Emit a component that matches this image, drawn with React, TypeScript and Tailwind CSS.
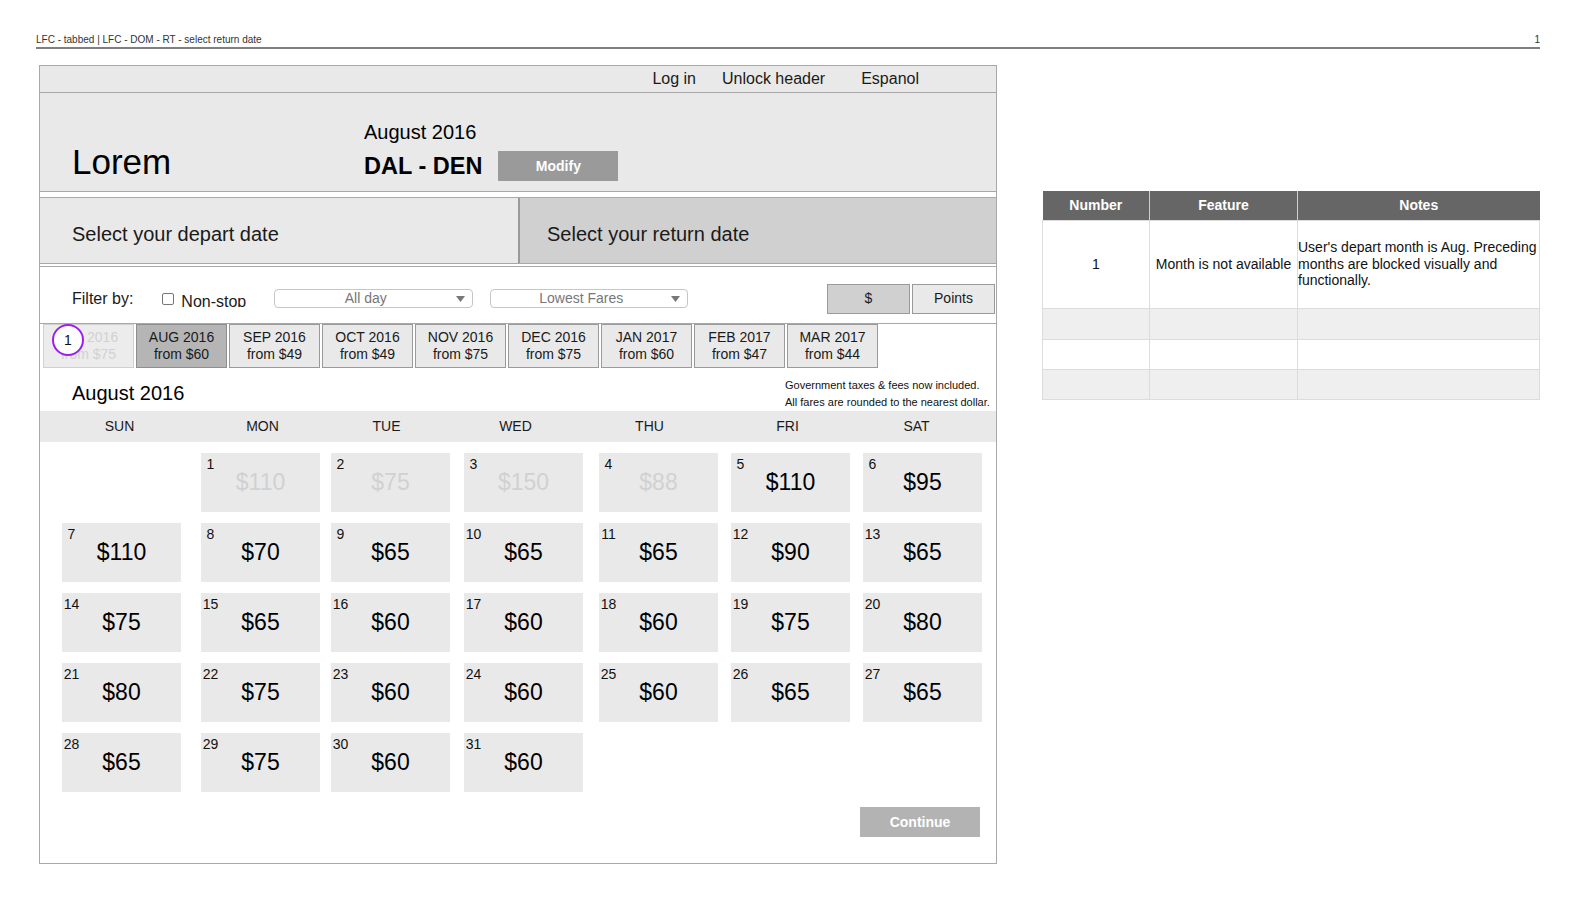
import React from 'react';

type Month = { label: string; from: string; state: 'disabled' | 'active' | 'normal' };

const months: Month[] = [
    { label: 'JUL 2016', from: '$75', state: 'disabled' },
    { label: 'AUG 2016', from: '$60', state: 'active' },
    { label: 'SEP 2016', from: '$49', state: 'normal' },
    { label: 'OCT 2016', from: '$49', state: 'normal' },
    { label: 'NOV 2016', from: '$75', state: 'normal' },
    { label: 'DEC 2016', from: '$75', state: 'normal' },
    { label: 'JAN 2017', from: '$60', state: 'normal' },
    { label: 'FEB 2017', from: '$47', state: 'normal' },
    { label: 'MAR 2017', from: '$44', state: 'normal' },
];

// header labels sit a little off the cell columns in the mock
const dayLabels = [
    { d: 'SUN', ml: 'ml-[20px]' },
    { d: 'MON', ml: 'ml-[24px]' },
    { d: 'TUE', ml: 'ml-[5px]' },
    { d: 'WED', ml: 'ml-[10px]' },
    { d: 'THU', ml: 'ml-[15px]' },
    { d: 'FRI', ml: 'ml-[19px]' },
    { d: 'SAT', ml: 'ml-[10px]' },
];

const cellMargins = ['ml-[22px]', 'ml-[20px]', 'ml-[11px]', 'ml-[14px]', 'ml-[16px]', 'ml-[13px]', 'ml-[13px]'];

type Day = { day: number; price: string; disabled?: boolean } | null;

const prices: string[] = [
    '$110', '$75', '$150', '$88', '$110', '$95',
    '$110', '$70', '$65', '$65', '$65', '$90', '$65',
    '$75', '$65', '$60', '$60', '$60', '$75', '$80',
    '$80', '$75', '$60', '$60', '$60', '$65', '$65',
    '$65', '$75', '$60', '$60',
];

const buildWeeks = (): Day[][] => {
    const all: Day[] = [null];
    prices.forEach((p, i) => all.push({ day: i + 1, price: p, disabled: i < 4 }));
    const weeks: Day[][] = [];
    for (let i = 0; i < all.length; i += 7) weeks.push(all.slice(i, i + 7));
    return weeks;
};

const weeks = buildWeeks();

const Arrow = () => (
    <svg width="9" height="6" viewBox="0 0 9 6" className="shrink-0">
        <polygon points="0,0 9,0 4.5,6" fill="#777" />
    </svg>
);

const Select = ({ label, ml, w }: { label: string; ml: string; w: string }) => (
    <div className={`${ml} ${w} h-[19px] border border-[#c6c6c6] rounded-[4px] bg-white flex items-center`}>
        <span className="flex-1 text-center text-[14px] leading-[17px] text-[#777]">{label}</span>
        <span className="mr-[7px] flex items-center">
            <Arrow />
        </span>
    </div>
);

const DayCell = ({ item, ml }: { item: Day; ml: string }) => {
    if (!item) return <div className={`${ml} w-[119px] h-[59px] shrink-0`} />;
    return (
        <div className={`${ml} relative w-[119px] h-[59px] shrink-0 bg-[#e9e9e9] flex items-center justify-center`}>
            <span className="absolute left-0 top-[3px] w-[19px] text-center text-[14px] leading-[16px] text-[#111]">
                {item.day}
            </span>
            <span className={`text-[23px] leading-none ${item.disabled ? 'text-[#d1d1d1]' : 'text-black'}`}>
                {item.price}
            </span>
        </div>
    );
};

const MonthTab = ({ m }: { m: Month }) => {
    const look =
        m.state === 'disabled'
            ? 'bg-[#ececec] border-[#d0d0d0] text-[#d2d2d2]'
            : m.state === 'active'
              ? 'bg-[#b5b5b5] border-[#8e8e8e] text-[#1a1a1a]'
              : 'bg-[#e9e9e9] border-[#9a9a9a] text-[#1a1a1a]';
    return (
        <div className={`w-[91px] h-[44px] border ${look} flex flex-col items-center justify-center text-[14px] leading-[17px]`}>
            <span>{m.label}</span>
            <span>from {m.from}</span>
        </div>
    );
};

const App = () => {
    return (
        <div className="w-[1578px] h-[913px] bg-white pt-[34px] pl-[36px] pr-[38px] font-['Liberation_Sans',Arial,sans-serif] text-[#1a1a1a]">
            <div className="flex justify-between text-[10px] leading-[12px] text-[#333]">
                <span>LFC - tabbed | LFC - DOM - RT - select return date</span>
                <span>1</span>
            </div>
            <div className="mt-[1px] h-[2px] bg-[#7f7f7f]" />

            <div className="mt-[16px] flex items-start">
                {/* wireframe */}
                <div className="ml-[3px] w-[958px] h-[799px] shrink-0 border border-[#a8a8a8] flex flex-col">
                    <div className="h-[27px] bg-[#e9e9e9] border-b border-[#a8a8a8] flex items-center justify-end pr-[77px] text-[16px]">
                        <span>Log in</span>
                        <span className="ml-[26px]">Unlock header</span>
                        <span className="ml-[36px]">Espanol</span>
                    </div>

                    <div className="h-[99px] bg-[#e9e9e9] border-b border-[#a8a8a8] flex pl-[32px]">
                        <div className="mt-[48px] w-[292px] text-[35px] leading-[42px] text-black">Lorem</div>
                        <div className="mt-[27px] flex flex-col">
                            <span className="text-[20px] leading-[24px] text-black">August 2016</span>
                            <div className="mt-[7px] flex items-center">
                                <span className="text-[23.5px] leading-[30px] font-bold text-black">DAL - DEN</span>
                                <button className="ml-[16px] w-[120px] h-[30px] bg-[#9a9a9a] text-white text-[14px] font-bold">
                                    Modify
                                </button>
                            </div>
                        </div>
                    </div>

                    <div className="mt-[5px] h-[67px] border-y border-[#a8a8a8] flex text-[20px] text-[#1a1a1a]">
                        <div className="w-[478px] bg-[#e9e9e9] flex items-center pl-[32px] pt-[6px]">Select your depart date</div>
                        <div className="flex-1 bg-[#d0d0d0] border-l-2 border-[#9a9a9a] flex items-center pl-[27px] pt-[6px]">
                            Select your return date
                        </div>
                    </div>

                    <div className="mt-[2px] h-[58px] border-y border-[#a8a8a8] flex items-center pl-[32px] pr-[1px] pt-[7px] text-[16px]">
                        <span>Filter by:</span>
                        <span className="ml-[29px] w-[12px] h-[12px] border border-[#777] rounded-[2px] bg-white" />
                        <span className="ml-[7px] mt-[2px] h-[15px] overflow-hidden leading-[19px]">Non-stop</span>
                        <Select label="All day" ml="ml-[28px]" w="w-[199px]" />
                        <Select label="Lowest Fares" ml="ml-[17px]" w="w-[198px]" />
                        <button className="ml-auto w-[83px] h-[30px] border border-[#9a9a9a] bg-[#d0d0d0] text-[14px]">$</button>
                        <button className="ml-[2px] w-[83px] h-[30px] border border-[#9a9a9a] bg-[#e9e9e9] text-[14px]">Points</button>
                    </div>

                    <div className="relative flex gap-[2px] pl-[3px]">
                        {months.map((m) => (
                            <MonthTab key={m.label} m={m} />
                        ))}
                        <div className="absolute left-[12px] top-0 w-[32px] h-[32px] rounded-full border-2 border-[#9b1ef2] bg-white flex items-center justify-center text-[14px] text-[#111]">
                            1
                        </div>
                    </div>

                    <div className="h-[43px] flex">
                        <div className="pl-[32px] pt-[13px] text-[20px] leading-[24px] text-black">August 2016</div>
                        <div className="ml-auto w-[211px] pt-[9px] text-[11px] leading-[17px] text-[#111]">
                            <div>Government taxes &amp; fees now included.</div>
                            <div>All fares are rounded to the nearest dollar.</div>
                        </div>
                    </div>

                    <div className="h-[31px] bg-[#e9e9e9] flex items-center text-[14px] text-[#1a1a1a]">
                        {dayLabels.map((l) => (
                            <span key={l.d} className={`${l.ml} w-[119px] shrink-0 text-center`}>
                                {l.d}
                            </span>
                        ))}
                    </div>

                    <div className="mt-[11px] flex flex-col gap-y-[11px]">
                        {weeks.map((w, wi) => (
                            <div key={wi} className="flex">
                                {w.map((d, di) => (
                                    <DayCell key={di} item={d} ml={cellMargins[di]} />
                                ))}
                            </div>
                        ))}
                    </div>

                    <div className="mt-[15px] flex justify-end pr-[16px]">
                        <button className="w-[120px] h-[30px] bg-[#b3b3b3] text-white text-[14px] font-bold">Continue</button>
                    </div>
                </div>

                {/* notes table */}
                <table className="ml-[45px] mt-[126px] w-[498px] table-fixed border-collapse text-[14px] text-[#111]">
                    <colgroup>
                        <col className="w-[107px]" />
                        <col className="w-[148px]" />
                        <col />
                    </colgroup>
                    <thead>
                        <tr className="h-[29px] bg-[#666666] text-white">
                            <th className="font-bold">Number</th>
                            <th className="font-bold border-l border-[#cfcfcf]">Feature</th>
                            <th className="font-bold border-l border-[#cfcfcf]">Notes</th>
                        </tr>
                    </thead>
                    <tbody>
                        <tr className="h-[88px] bg-white">
                            <td className="border border-[#dcdcdc] text-center">1</td>
                            <td className="border border-[#dcdcdc] text-center whitespace-nowrap">Month is not available</td>
                            <td className="border border-[#dcdcdc] pl-0 leading-[16.5px] whitespace-nowrap">
                                User's depart month is Aug. Preceding
                                <br />
                                months are blocked visually and
                                <br />
                                functionally.
                            </td>
                        </tr>
                        <tr className="h-[31px] bg-[#efefef]">
                            <td className="border border-[#dcdcdc]" />
                            <td className="border border-[#dcdcdc]" />
                            <td className="border border-[#dcdcdc]" />
                        </tr>
                        <tr className="h-[30px] bg-white">
                            <td className="border border-[#dcdcdc]" />
                            <td className="border border-[#dcdcdc]" />
                            <td className="border border-[#dcdcdc]" />
                        </tr>
                        <tr className="h-[30px] bg-[#efefef]">
                            <td className="border border-[#dcdcdc]" />
                            <td className="border border-[#dcdcdc]" />
                            <td className="border border-[#dcdcdc]" />
                        </tr>
                    </tbody>
                </table>
            </div>
        </div>
    );
};

export default App;
